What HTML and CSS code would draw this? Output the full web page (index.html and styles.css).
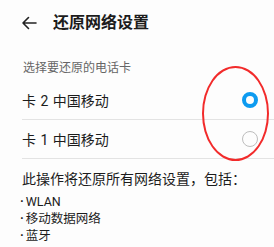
FILE: index.html
```html
<!DOCTYPE html>
<html lang="zh-CN">
<head>
  <meta charset="UTF-8" />
  <meta name="viewport" content="width=device-width, initial-scale=1.0" />
  <title>还原网络设置</title>
  <link rel="stylesheet" href="styles.css">
</head>
<body>
<div class="header">
  <svg class="back" width="16" height="14" viewBox="0 0 16 14">
    <path d="M15 7H2M7.5 1.5L2 7l5.5 5.5" fill="none" stroke="#222" stroke-width="1.6" stroke-linecap="round" stroke-linejoin="round"/>
  </svg>
  <h1>还原网络设置</h1>
</div>
<div class="content">
  <p class="subtitle">选择要还原的电话卡</p>

  <div class="cards">
    <div class="row">
      <span>卡 2 中国移动</span>
      <span class="radio checked"></span>
    </div>
    <div class="row">
      <span>卡 1 中国移动</span>
      <span class="radio"></span>
    </div>
    <div class="mark"></div>
  </div>

  <p class="desc">此操作将还原所有网络设置，包括：</p>
  <ul class="list">
    <li>WLAN</li>
    <li>移动数据网络</li>
    <li>蓝牙</li>
  </ul>
</div>
</body>
</html>
```

FILE: styles.css
```css
body,
html {
  margin: 0;
  padding: 0;
  background-color: #fdfdfd;
  font-family: Roboto, "Noto Sans CJK SC", sans-serif;
  color: #1c1c1c;
}
.header {
  display: flex;
  align-items: center;
  height: 46px;
  padding-left: 21px;
}
.back {
  display: block;
}
h1 {
  margin: 0 0 0 16px;
  font-size: 16px;
  font-weight: 600;
  line-height: 20px;
}
.content {
  position: relative;
  border-left: 2px solid #f1f1f1;
  margin-left: -2px;
  padding-left: 2px;
}
.subtitle {
  margin: 0;
  padding: 12px 0 3px 21px;
  font-size: 12px;
  line-height: 20px;
  color: #666;
}
.cards {
  position: relative;
}
.row {
  display: flex;
  align-items: center;
  justify-content: space-between;
  height: 38px;
  margin-left: 20px;
  padding-right: 16px;
  border-bottom: 1px solid #e3e3e3;
  font-size: 14px;
  word-spacing: 1px;
}
.radio {
  box-sizing: border-box;
  width: 16px;
  height: 16px;
  border: 1.5px solid #bdbdbd;
  border-radius: 50%;
}
.radio.checked {
  border: 4.5px solid #0d9bf0;
}
.mark {
  position: absolute;
  left: 200px;
  top: -15px;
  width: 67px;
  height: 95px;
  border: 2px solid #f22b2b;
  border-radius: 50%;
  box-sizing: border-box;
}
.desc {
  margin: 0;
  padding: 10px 0 0 20px;
  font-size: 14px;
  line-height: 20px;
}
.list {
  list-style: none;
  margin: 4px 0 0;
  padding-left: 18px;
  font-size: 12.5px;
  line-height: 17px;
}
.list li::before {
  content: "\00B7";
  font-family: Roboto, sans-serif;
  font-weight: 700;
  margin-right: 2px;
}
```
